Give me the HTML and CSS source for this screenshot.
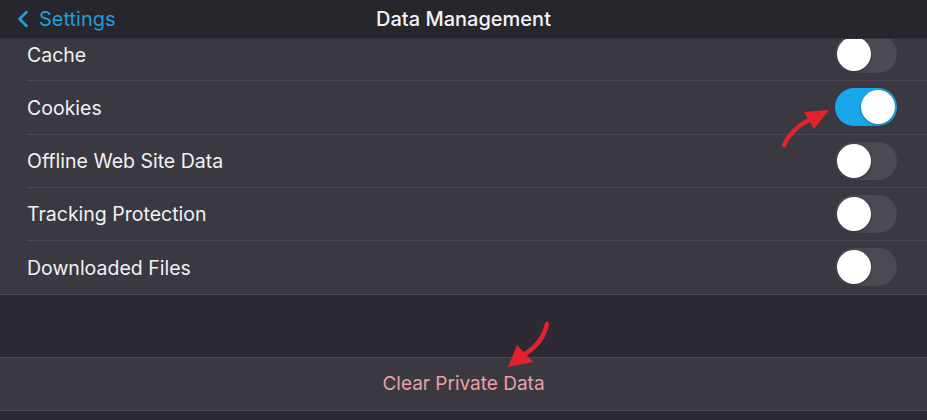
FILE: index.html
```html
<!DOCTYPE html>
<html>
<head>
<meta charset="utf-8">
<link rel="stylesheet" href="styles.css">
</head>
<body>
<div class="screen">
  <header class="navbar">
    <div class="back">
      <svg class="chev" width="14" height="18" viewBox="0 0 14 18"><path d="M10.5 2 L3.5 9 L10.5 16" fill="none" stroke="#1d9fdc" stroke-width="2.6" stroke-linecap="round" stroke-linejoin="round"/></svg>
      <span>Settings</span>
    </div>
    <div class="title">Data Management</div>
  </header>
  <main class="content">
    <div class="scroll">
      <ul class="group">
        <li class="row"><span class="label">Cache</span><span class="switch"></span></li>
        <li class="row"><span class="label">Cookies</span><span class="switch on"></span></li>
        <li class="row"><span class="label">Offline Web Site Data</span><span class="switch"></span></li>
        <li class="row"><span class="label">Tracking Protection</span><span class="switch"></span></li>
        <li class="row"><span class="label">Downloaded Files</span><span class="switch"></span></li>
      </ul>
      <div class="spacer"></div>
      <div class="action">Clear Private Data</div>
    </div>
  </main>
  <svg class="annot" width="927" height="420" viewBox="0 0 927 420">
    <path d="M784 145 C 789 134, 797 126, 809 120" fill="none" stroke="#e3232b" stroke-width="4.5" stroke-linecap="round"/>
    <polygon points="829,110 804,112 814,129" fill="#e3232b"/>
    <path d="M547 324 C 544 338, 536 347, 525 354" fill="none" stroke="#e3232b" stroke-width="4.5" stroke-linecap="round"/>
    <polygon points="508,367 517,345 533,362" fill="#e3232b"/>
  </svg>
</div>
</body>
</html>
```
FILE: styles.css
```css
* { box-sizing: border-box; }
html, body { margin: 0; padding: 0; }
body {
  width: 927px;
  height: 420px;
  overflow: hidden;
  background: #2c2b33;
  font-family: "Inter", "Liberation Sans", sans-serif;
  color: #f1f1f3;
}
.screen {
  position: relative;
  width: 927px;
  height: 420px;
  display: flex;
  flex-direction: column;
}
.navbar {
  position: relative;
  z-index: 2;
  height: 39px;
  flex: 0 0 39px;
  background: #27262d;
  border-bottom: 1px solid #34333b;
  display: flex;
  align-items: center;
  justify-content: center;
}
.back {
  position: absolute;
  left: 16px;
  top: 0;
  height: 38px;
  display: flex;
  align-items: center;
  gap: 9px;
  color: #1d9fdc;
  font-size: 20px;
}
.chev { display: block; }
.title {
  font-size: 20px;
  font-weight: 500;
  color: #f4f4f6;
  margin-top: -1px;
}
.content {
  flex: 1;
  overflow: hidden;
}
.scroll { margin-top: -11px; }
.group {
  list-style: none;
  margin: 0;
  padding: 0 0 0 27px;
  background: #3a3941;
  border-bottom: 1px solid #4a4951;
}
.row {
  height: 53.25px;
  display: flex;
  align-items: center;
  justify-content: space-between;
  padding-right: 30px;
  border-bottom: 1px solid #4a4951;
  font-size: 19.5px;
}
.label { margin-top: 1px; }
.row:last-child { border-bottom: none; height: 52.5px; }
.switch {
  position: relative;
  width: 62px;
  height: 38px;
  border-radius: 19px;
  background: #4b4a53;
  flex: 0 0 auto;
}
.switch::after {
  content: "";
  position: absolute;
  left: 2px;
  top: 2px;
  width: 34px;
  height: 34px;
  border-radius: 50%;
  background: #ffffff;
  box-shadow: 0 1px 3px rgba(0,0,0,0.35);
}
.switch.on { background: #18a8ea; }
.switch.on::after { left: 26px; }
.spacer { height: 62px; }
.action {
  height: 54px;
  background: #3a3941;
  border-top: 1px solid #4a4951;
  border-bottom: 1px solid #4a4951;
  display: flex;
  align-items: center;
  justify-content: center;
  color: #e8a1ab;
  font-size: 19px;
}
.annot {
  position: absolute;
  left: 0;
  top: 0;
  z-index: 3;
  pointer-events: none;
}
```
